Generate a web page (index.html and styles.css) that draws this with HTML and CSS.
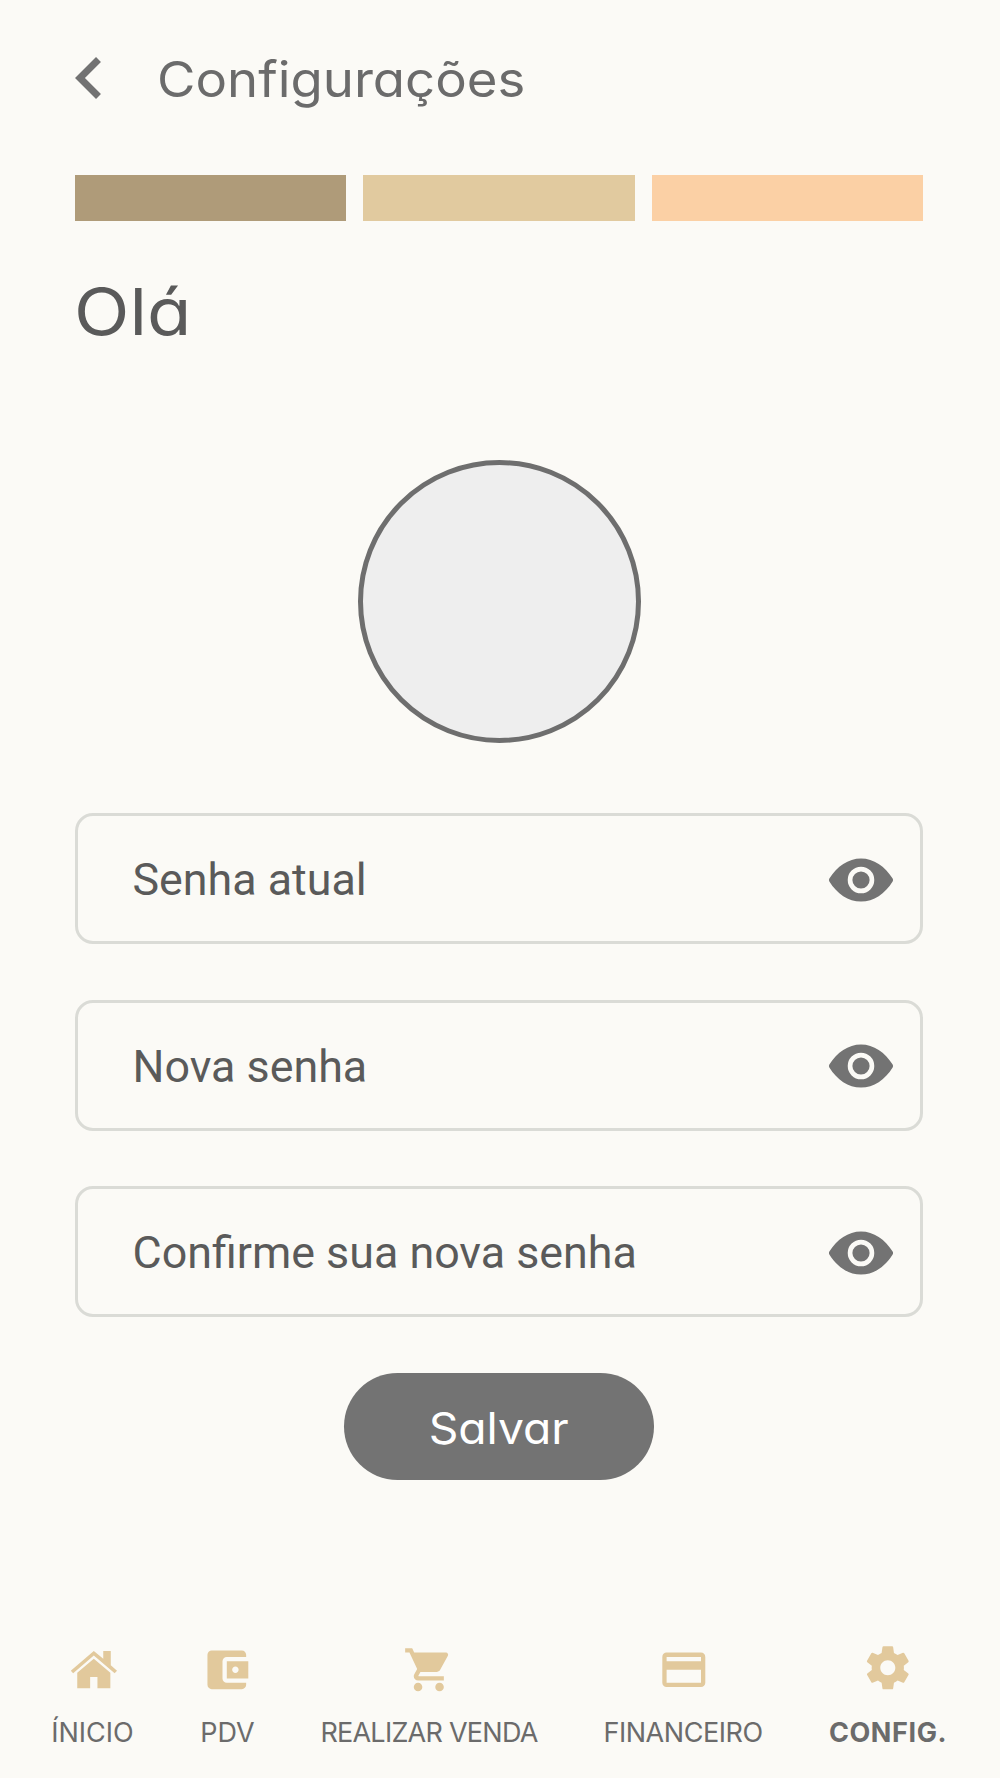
FILE: index.html
```html
<!DOCTYPE html>
<html lang="pt-BR">
<head>
<meta charset="utf-8">
<title>Configurações</title>
<link rel="stylesheet" href="styles.css">
</head>
<body>
<svg width="0" height="0" class="defs"><defs><symbol id="eye" viewBox="0 0 24 24"><path fill-rule="evenodd" d="M12 4.6C7.6 4.6 3.8 7.3 1.15 11.5q-.3.5 0 1C3.8 16.7 7.6 19.4 12 19.4s8.2-2.7 10.850-6.900q.3-.5 0-1C20.200 7.300 16.400 4.600 12 4.600zM12 16.550a4.550 4.550 0 1 1 0-9.100 4.550 4.550 0 0 1 0 9.100zM12 9.050a2.950 2.950 0 1 0 0 5.900 2.950 2.950 0 0 0 0-5.900z"/></symbol></defs></svg>
<main class="screen">
  <header class="topbar">
    <svg class="back" viewBox="8 6 7.41 12"><path d="M15.41 7.41 14 6l-6 6 6 6 1.41-1.41L10.83 12z"/></svg>
    <h1 class="title">Configurações</h1>
  </header>
  <div class="swatches">
    <div class="swatch-dark"></div>
    <div class="swatch-mid"></div>
    <div class="swatch-light"></div>
  </div>
  <h2 class="greeting">Olá</h2>
  <div class="avatar"></div>
  <form class="form">
    <div class="field"><span>Senha atual</span><svg class="eye"><use href="#eye"/></svg></div>
    <div class="field"><span>Nova senha</span><svg class="eye"><use href="#eye"/></svg></div>
    <div class="field"><span>Confirme sua nova senha</span><svg class="eye"><use href="#eye"/></svg></div>
    <button class="save" type="button"><span class="save-text">Salvar</span></button>
  </form>
  <nav class="nav">
    <a class="item"><svg class="icon icon-home" viewBox="0 0 24 24"><path d="M12 3.3 1.3 12.5l1.1 1.1L12 5.4l9.7 8.2 1.1-1.1-2.9-2.6V3.3h-3.5v3.6z"/><path d="M12 6.900 4.300 13.400v7.200h6v-5.200h3.400v5.200h6v-7.200z"/></svg><span class="label">ÍNICIO</span></a>
    <a class="item"><svg class="icon icon-wallet" viewBox="0 0 24 24"><path d="M21 18v1c0 1.1-.9 2-2 2H5c-1.11 0-2-.9-2-2V5c0-1.1.89-2 2-2h14c1.1 0 2 .9 2 2v1h-9c-1.11 0-2 .9-2 2v8c0 1.1.89 2 2 2h9zm-9-2h10V8H12v8zm4-2.500c-.83 0-1.500-.67-1.500-1.500s.67-1.500 1.500-1.500 1.500.67 1.500 1.500-.67 1.500-1.500 1.500z"/></svg><span class="label">PDV</span></a>
    <a class="item"><svg class="icon" viewBox="0 0 24 24"><path d="M7 18c-1.1 0-1.99.9-1.99 2S5.9 22 7 22s2-.9 2-2-.9-2-2-2zM1 2v2h2l3.6 7.59-1.35 2.45c-.16.28-.25.61-.25.96 0 1.1.9 2 2 2h12v-2H7.42c-.14 0-.25-.11-.25-.25l.03-.12.9-1.63h7.45c.75 0 1.41-.41 1.75-1.03l3.58-6.49A1.003 1.003 0 0 0 20 4H5.21l-.94-2H1zm16 16c-1.1 0-1.99.9-1.99 2s.89 2 1.99 2 2-.9 2-2-.9-2-2-2z"/></svg><span class="label label-sale">REALIZAR VENDA</span></a>
    <a class="item"><svg class="icon icon-card" viewBox="0 0 24 24"><path d="M20 4H4c-1.11 0-1.99.89-1.99 2L2 18c0 1.11.89 2 2 2h16c1.11 0 2-.89 2-2V6c0-1.11-.89-2-2-2zm0 14H4v-6h16v6zm0-10H4V6h16v2z"/></svg><span class="label label-finance">FINANCEIRO</span></a>
    <a class="item active"><svg class="icon icon-gear" viewBox="0 0 24 24"><path d="M19.43 12.98c.04-.32.07-.64.07-.98s-.03-.66-.07-.98l2.11-1.65c.19-.15.24-.42.12-.64l-2-3.46c-.12-.22-.39-.3-.61-.22l-2.49 1c-.52-.4-1.08-.73-1.69-.98l-.38-2.65A.488.488 0 0 0 14 2h-4c-.25 0-.46.18-.49.42l-.38 2.65c-.61.25-1.17.59-1.69.98l-2.49-1c-.23-.09-.49 0-.61.22l-2 3.46c-.13.22-.07.49.12.64l2.11 1.65c-.04.32-.07.65-.07.98s.03.66.07.98l-2.11 1.65c-.19.15-.24.42-.12.64l2 3.46c.12.22.39.3.61.22l2.49-1c.52.4 1.08.73 1.69.98l.38 2.65c.03.24.24.42.49.42h4c.25 0 .46-.18.49-.42l.38-2.65c.61-.25 1.17-.59 1.69-.98l2.49 1c.23.09.49 0 .61-.22l2-3.46c.12-.22.07-.49-.12-.64l-2.11-1.65zM12 15.500c-1.93 0-3.500-1.57-3.500-3.500s1.57-3.500 3.500-3.500 3.500 1.57 3.500 3.500-1.57 3.500-3.500 3.500z"/></svg><span class="label">CONFIG.</span></a>
  </nav>
</main>
</body>
</html>
```

FILE: styles.css
```css
* { box-sizing: border-box; }

body {
  margin: 0;
  background: #fbfaf6;
  color: #6b6b6b;
  font-family: Inter, "Open Sans", sans-serif;
  font-feature-settings: "cv11" 1;
}

.screen {
  width: 1000px;
  height: 1778px;
  padding: 47px 77px 0 75px;
  display: flex;
  flex-direction: column;
}

svg { display: block; flex: none; }
.defs { display: none; }

.topbar { display: flex; align-items: center; height: 64px; }
.back { width: 26px; height: 42px; margin-top: -2px; fill: #727272; }
.title {
  margin: 2px 0 0 55.5px;
  font-size: 49px;
  font-weight: 400;
  line-height: 64px;
  transform: scaleX(1.075);
  transform-origin: left;
}

.swatches { display: grid; grid-template-columns: repeat(3, 1fr); gap: 17px; height: 46px; margin-top: 64px; }
.swatch-dark { background: #af9b79; }
.swatch-mid { background: #e1ca9f; }
.swatch-light { background: #fbd0a5; }

.greeting {
  align-self: flex-start;
  margin: 51px 0 0 -1px;
  height: 80px;
  line-height: 80px;
  font-size: 65px;
  font-weight: 400;
  color: #5a5a5a;
  transform: scaleX(1.115);
  transform-origin: left;
}

.avatar { align-self: center; margin-top: 108px; width: 283px; height: 283px; border: 5px solid #6e6e6e; border-radius: 50%; background: #eee; }

.form { display: flex; flex-direction: column; margin-top: 70px; gap: 55.5px; }
.field {
  display: flex;
  align-items: center;
  justify-content: space-between;
  height: 131px;
  padding: 2px 24px 0 54.5px;
  border: 3px solid #dadbd6;
  border-radius: 18px;
  font-family: Roboto, sans-serif;
  font-size: 44.8px;
  color: #5a5a5a;
}
.eye { width: 70px; height: 70px; fill: #737373; }

.save {
  align-self: center;
  width: 310px;
  height: 107px;
  padding: 3px 0 0;
  border: 0;
  border-radius: 54px;
  background: #737373;
  color: #fff;
  font: 400 44px/104px Inter, sans-serif;
  font-feature-settings: "cv11" 1;
}
.save-text { display: inline-block; transform: scaleX(1.05); }

.nav { display: grid; grid-template-columns: 83px 53px 216px 158px 118px; gap: 67px; margin: 164px -25px 0 -24px; }
.item { display: flex; flex-direction: column; align-items: center; gap: 20px; }
.icon { width: 51.6px; height: 51.6px; fill: #e2c99c; }
.icon-home { margin-left: 2px; }
.icon-wallet { margin-right: 0.5px; }
.icon-card { margin-left: 1px; }
.icon-gear { margin: -2px 0 2px; }
.label { font-size: 27px; line-height: 36px; white-space: nowrap; font-weight: 380; }
.label-sale { letter-spacing: -0.75px; }
.label-finance { letter-spacing: -0.45px; }
.active .label { font-weight: 700; letter-spacing: 0.6px; }
```
